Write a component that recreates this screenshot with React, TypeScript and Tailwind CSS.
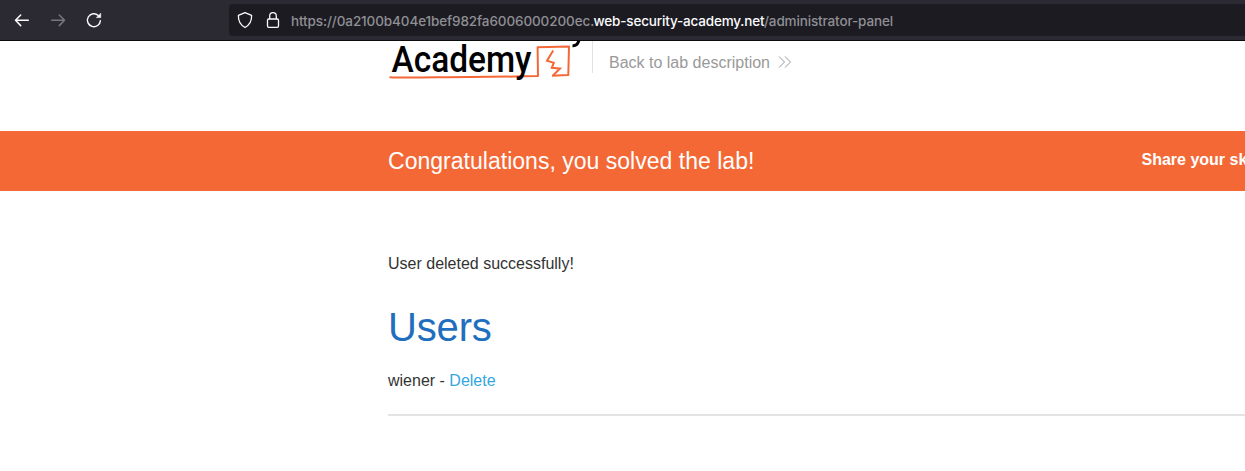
export default function App() {
  return (
    <div className="flex h-[471px] w-full flex-col overflow-hidden bg-white font-['Liberation_Sans',Arial,sans-serif] text-[#333332]">
      <header className="flex h-[41px] shrink-0 items-start border-b border-[#0c0c0d] bg-[#2b2a33]">
        <nav className="flex h-[40px] w-[229px] shrink-0 items-center">
          <svg className="h-[40px] w-[120px]" viewBox="0 0 120 40" fill="none" strokeWidth="1.5" strokeLinecap="round" strokeLinejoin="round">
            <path d="M28.3 20.3H16M20.7 15L15.5 20.3L20.7 25.6" stroke="#fbfbfe" />
            <path d="M51.7 20.3H64M59.3 15L64.5 20.3L59.3 25.6" stroke="#77767d" />
            <path d="M98.3 15.4A6.5 6.5 0 1 0 100.4 20.6" stroke="#fbfbfe" strokeWidth="1.4" />
            <path d="M100.7 13.6V17.6H96.7Z" fill="#fbfbfe" stroke="#fbfbfe" strokeWidth="0.6" />
          </svg>
        </nav>
        <div className="mt-1 flex h-8 flex-1 items-center overflow-hidden rounded-l-[4px] bg-[#1c1b22]">
          <svg className="h-8 w-[62px] shrink-0" viewBox="229 4 62 32" fill="none" stroke="#fbfbfe" strokeWidth="1.3" strokeLinejoin="round">
            <path d="M245 12.7L251.6 15.4C251.9 21 249.5 25 245 27.5C240.5 25 238.1 21 238.4 15.4Z" />
            <rect x="267.5" y="19" width="11" height="8.4" rx="1.3" />
            <path d="M269.7 19V15.9A3.3 3.3 0 0 1 276.3 15.9V19" />
          </svg>
          <div className="mt-[2px] flex whitespace-nowrap font-[Inter,sans-serif] text-[13.5px] leading-5 text-[#8f8f94]">
            <span className="w-[302.5px] font-medium tracking-[-0.11px]">https://0a2100b404e1bef982fa6006000200ec.</span>
            <span className="w-[170.5px] font-medium tracking-[-0.17px] text-[#fbfbfe]">web-security-academy.net</span>
            <span className="font-medium tracking-[-0.14px]">/administrator-panel</span>
          </div>
        </div>
      </header>
      <section className="flex h-[90px] shrink-0 items-start pl-[388px]">
        <svg className="h-[42px] w-[204px] shrink-0 overflow-hidden" viewBox="388 41 204 42" fill="none">
          <path d="M389.5 77.2C410 78.2 440 76.9 470 76.9S520 76.5 538 76.1L537.6 47.2L569 46.4L568.3 75L552 75.7" stroke="#f36836" strokeWidth="2" strokeLinejoin="round" />
          <path d="M553.2 50.5L547 60.7L553.8 62.8L551.8 67.8L560 68.5L553 75.5" stroke="#f36836" strokeWidth="2" />
          <text x="391.5" y="72" textLength="140" lengthAdjust="spacingAndGlyphs" fontFamily="Roboto, sans-serif" fontWeight="500" fontSize="36.5" fill="#000">Academy</text>
          <path d="M579 40C578 44 576.5 46 572.5 45.7" stroke="#000" strokeWidth="3" />
        </svg>
        <div className="flex h-8 items-start border-l border-[#e2e2e2] pl-4">
          <a className="mt-[13px] whitespace-nowrap text-[16px] leading-[18px] text-[#999]">Back to lab description</a>
          <svg className="ml-2 mt-[14px] h-[14px] w-[14px]" viewBox="0 0 14 14" fill="none" stroke="#999" strokeWidth="1">
            <path d="M1 1.5L6.5 7L1 12.5M7 1.5L12.5 7L7 12.5" />
          </svg>
        </div>
      </section>
      <section className="flex h-[60px] shrink-0 items-center justify-between bg-[#f46836] pl-[388px] text-white">
        <p className="whitespace-nowrap text-[23px] leading-7 tracking-[0.02px]">Congratulations, you solved the lab!</p>
        <p className="mb-[2px] w-[103.5px] overflow-hidden whitespace-nowrap text-[16px] font-bold leading-5">Share your skills!</p>
      </section>
      <main className="pl-[388px] pt-[63px]">
        <p className="text-[16px] leading-5">User deleted successfully!</p>
        <h1 className="mt-[29px] text-[40px] leading-[48px] tracking-[-0.15px] text-[#1f6fbe]">Users</h1>
        <p className="mt-5 text-[16px] leading-5">wiener - <a className="text-[#33a7df]">Delete</a></p>
        <hr className="mt-[23px] border-0 border-t-2 border-[#e4e4e4]" />
      </main>
    </div>
  );
}
